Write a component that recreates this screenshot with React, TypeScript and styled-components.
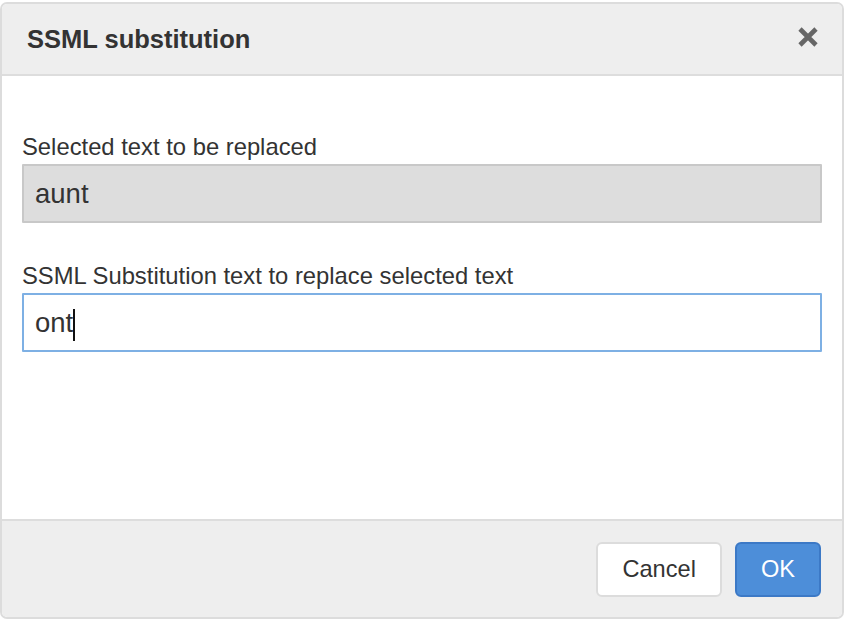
import * as React from "react";
import styled, { createGlobalStyle } from "styled-components";

const GlobalStyle = createGlobalStyle`
  html, body {
    margin: 0;
    padding: 0;
    background: #ffffff;
  }
  body {
    font-family: "Liberation Sans", Arial, Helvetica, sans-serif;
    color: #333333;
  }
`;

const Page = styled.div`
  width: 845px;
  height: 621px;
  padding-top: 2px;
  box-sizing: border-box;
`;

const Dialog = styled.section`
  width: 844px;
  height: 617px;
  box-sizing: border-box;
  border: 2px solid #dcdcdc;
  border-radius: 7px;
  background: #ffffff;
  display: flex;
  flex-direction: column;
  overflow: hidden;
`;

const Header = styled.header`
  height: 72px;
  flex: 0 0 auto;
  box-sizing: border-box;
  background: #eeeeee;
  border-bottom: 2px solid #dddddd;
  display: flex;
  align-items: center;
  justify-content: space-between;
  padding: 0 22px 0 25px;
`;

const Title = styled.h1`
  margin: 0;
  font-size: 25.5px;
  font-weight: 700;
  color: #333333;
  line-height: 30px;
`;

const CloseButton = styled.button`
  border: 0;
  background: transparent;
  padding: 0;
  width: 24px;
  height: 24px;
  display: flex;
  align-items: center;
  justify-content: center;
  cursor: pointer;
  margin-bottom: 4px;
`;

const Body = styled.div`
  flex: 1 1 auto;
  padding: 59px 20px 0 20px;
  display: flex;
  flex-direction: column;
`;

const Field = styled.div<{ $gap?: number }>`
  display: flex;
  flex-direction: column;
  flex: 0 0 auto;
  margin-bottom: ${(p) => p.$gap ?? 0}px;
`;

const Label = styled.label`
  font-size: 23.8px;
  line-height: 24px;
  color: #333333;
  margin-bottom: 5px;
`;

const TextBox = styled.div<{ $disabled?: boolean; $focused?: boolean }>`
  width: 800px;
  height: 59px;
  flex: 0 0 59px;
  box-sizing: border-box;
  border: 2px solid
    ${(p) => (p.$focused ? "#7eb0e4" : p.$disabled ? "#c8c8c8" : "#cccccc")};
  background: ${(p) => (p.$disabled ? "#dddddd" : "#ffffff")};
  border-radius: 1px;
  display: flex;
  align-items: center;
  padding: 0 12px 0 11px;
  font-size: 27.5px;
  color: #333333;
`;

const Caret = styled.span`
  display: inline-block;
  width: 2px;
  height: 32px;
  background: #111111;
  margin-top: 4px;
`;

const Footer = styled.footer`
  height: 98px;
  flex: 0 0 auto;
  box-sizing: border-box;
  background: #eeeeee;
  border-top: 2px solid #dddddd;
  display: flex;
  align-items: center;
  justify-content: flex-end;
  gap: 13px;
  padding: 0 21px 0 0;
`;

const Button = styled.button<{ $primary?: boolean }>`
  height: 55px;
  box-sizing: border-box;
  border-radius: 6px;
  border: 2px solid ${(p) => (p.$primary ? "#3c79c6" : "#dcdcdc")};
  background: ${(p) => (p.$primary ? "#4d8ed9" : "#ffffff")};
  color: ${(p) => (p.$primary ? "#ffffff" : "#333333")};
  font-family: "Liberation Sans", Arial, Helvetica, sans-serif;
  font-size: 23.6px;
  padding: 0 24px;
  margin-top: 1px;
  cursor: pointer;
`;

const CloseIcon = () => (
  <svg width="22" height="22" viewBox="0 0 22 22">
    <path
      d="M3 3 L19 19 M19 3 L3 19"
      stroke="#666666"
      strokeWidth="4.6"
      strokeLinecap="butt"
      fill="none"
    />
  </svg>
);

export default function App() {
  return (
    <Page>
      <GlobalStyle />
      <Dialog>
        <Header>
          <Title>SSML substitution</Title>
          <CloseButton aria-label="Close">
            <CloseIcon />
          </CloseButton>
        </Header>
        <Body>
          <Field $gap={41}>
            <Label>Selected text to be replaced</Label>
            <TextBox $disabled>aunt</TextBox>
          </Field>
          <Field>
            <Label>SSML Substitution text to replace selected text</Label>
            <TextBox $focused>
              ont
              <Caret />
            </TextBox>
          </Field>
        </Body>
        <Footer>
          <Button>Cancel</Button>
          <Button $primary>OK</Button>
        </Footer>
      </Dialog>
    </Page>
  );
}
